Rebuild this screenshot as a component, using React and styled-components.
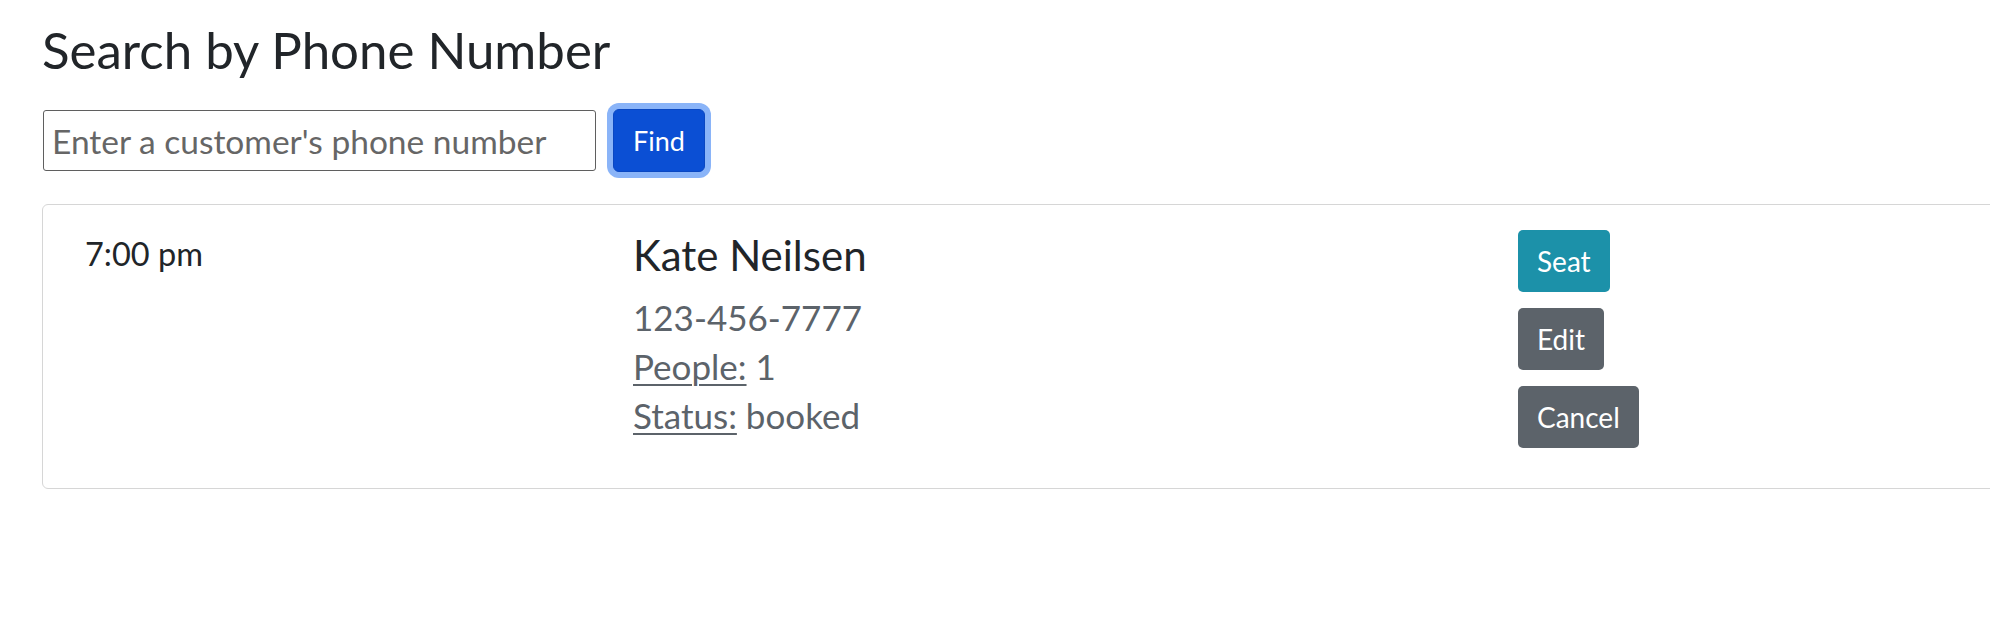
import React from "react";
import styled, { createGlobalStyle } from "styled-components";

const GlobalStyle = createGlobalStyle`
  body {
    margin: 0;
    background: #fff;
    font-family: Lato, "Open Sans", sans-serif;
    color: #212529;
    overflow: hidden;
  }
`
const Page = styled.div`
  padding: 19px 0 0 42px;
`
const Title = styled.h2`
  margin: 0;
  font-size: 51px;
  font-weight: 400;
  line-height: 1.22;
`
const SearchForm = styled.form`
  display: flex;
  align-items: center;
  gap: 17px;
  margin: 28px 0 32px 1px;
`
const PhoneInput = styled.input`
  box-sizing: border-box;
  width: 553px;
  height: 61px;
  padding: 0 8px;
  border: 1.5px solid #5f5f5f;
  border-radius: 3px;
  font-family: inherit;
  font-size: 33.5px;
  color: #212529;
  &::placeholder{
    color: #666;
  }
`
const FindButton = styled.button`
  height: 63px;
  padding: 0 19px;
  border: 1px solid #0a47c2;
  border-radius: 6px;
  background: #0b4fd4;
  color: #fff;
  font-family: inherit;
  font-size: 27px;
  box-shadow: 0 0 0 6px #8ab4f8;
`
// one reservation, stretches past the right edge like the original
const Card = styled.div`
  box-sizing: border-box;
  width: 2100px;
  padding: 25px 0 40px 42px;
  border: 1px solid #d6d6d6;
  border-radius: 6px;
  display: grid;
  grid-template-columns: 548px 884px auto;
  align-items: start;
`
const Time = styled.div`
  font-size: 32.5px;
  line-height: 1.5;
`
const Name = styled.h4`
  margin: 0 0 12px 0;
  font-size: 42px;
  font-weight: 400;
  line-height: 1.2;
`
const Detail = styled.div`
  font-size: 35px;
  line-height: 49px;
  color: #5c636a;
`
const Label = styled.span`
  text-decoration: underline;
  text-underline-offset: 4px;
  text-decoration-thickness: 2px;
`
const Actions = styled.div`
  display: flex;
  flex-direction: column;
  align-items: flex-start;
  gap: 16px;
  padding-left: 1px;
`
const ActionButton = styled.button`
  height: 62px;
  padding: 0 19px;
  border: none;
  border-radius: 5px;
  background: ${props => props.color || "#5c636a"};
  color: #fff;
  font-family: inherit;
  font-size: 28px;
`

const App = () => {
  return(
    <Page>
      <GlobalStyle />
      <Title>Search by Phone Number</Title>
      <SearchForm onSubmit={e => e.preventDefault()}>
        <PhoneInput type="tel" placeholder="Enter a customer's phone number" />
        <FindButton type="submit">Find</FindButton>
      </SearchForm>
      <Card>
        <Time>7:00 pm</Time>
        <div>
          <Name>Kate Neilsen</Name>
          <Detail>123-456-7777</Detail>
          <Detail><Label>People:</Label> 1</Detail>
          <Detail><Label>Status:</Label> booked</Detail>
        </div>
        <Actions>
          <ActionButton color="#1c91a9">Seat</ActionButton>
          <ActionButton>Edit</ActionButton>
          <ActionButton>Cancel</ActionButton>
        </Actions>
      </Card>
    </Page>
  )
}
export default App
